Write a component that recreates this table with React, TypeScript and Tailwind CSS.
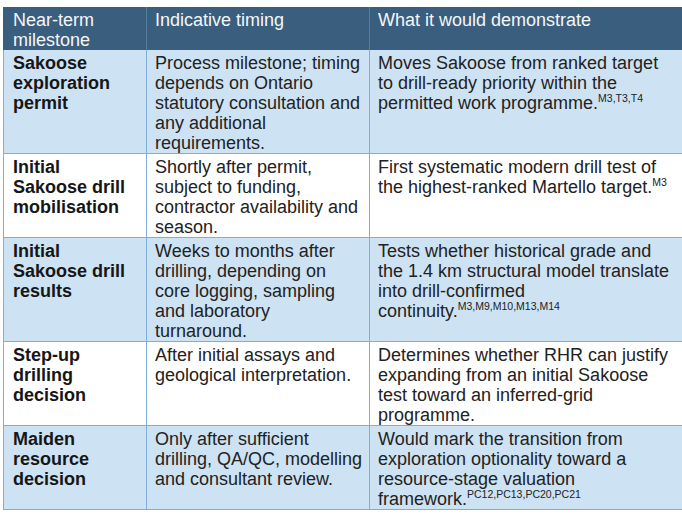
import React from 'react';

type Row = {
  milestone: string;
  timing: string;
  demo: string;
  refs?: string;
  shaded: boolean;
};

const rows: Row[] = [
  {
    milestone: 'Sakoose exploration permit',
    timing: 'Process milestone; timing depends on Ontario statutory consultation and any additional requirements.',
    demo: 'Moves Sakoose from ranked target to drill-ready priority within the permitted work programme.',
    refs: 'M3,T3,T4',
    shaded: true,
  },
  {
    milestone: 'Initial Sakoose drill mobilisation',
    timing: 'Shortly after permit, subject to funding, contractor availability and season.',
    demo: 'First systematic modern drill test of the highest-ranked Martello target.',
    refs: 'M3',
    shaded: false,
  },
  {
    milestone: 'Initial Sakoose drill results',
    timing: 'Weeks to months after drilling, depending on core logging, sampling and laboratory turnaround.',
    demo: 'Tests whether historical grade and the 1.4 km structural model translate into drill-confirmed continuity.',
    refs: 'M3,M9,M10,M13,M14',
    shaded: true,
  },
  {
    milestone: 'Step-up drilling decision',
    timing: 'After initial assays and geological interpretation.',
    demo: 'Determines whether RHR can justify expanding from an initial Sakoose test toward an inferred-grid programme.',
    shaded: false,
  },
  {
    milestone: 'Maiden resource decision',
    timing: 'Only after sufficient drilling, QA/QC, modelling and consultant review.',
    demo: 'Would mark the transition from exploration optionality toward a resource-stage valuation framework.',
    refs: 'PC12,PC13,PC20,PC21',
    shaded: true,
  },
];

export default function App() {
  return (
    <div className="w-[682px] h-[515px] overflow-hidden bg-white pt-[7px] pl-[3px] font-['Liberation_Sans',Arial,sans-serif] text-[18px] leading-[20px]">
      <div className="grid w-[679px] grid-cols-[143px_223px_313px]">
        {/* Header */}
        <div className="bg-[#3a5e7e] text-[#f4f6f8] pl-[9px] pr-[14px] pt-[3px] border-l border-[#3a5e7e]">
          Near-term milestone
        </div>
        <div className="bg-[#3a5e7e] text-[#f4f6f8] pl-[8px] pr-[5px] pt-[3px] border-l border-[#5b7d9c]">
          Indicative timing
        </div>
        <div className="bg-[#3a5e7e] text-[#f4f6f8] pl-[8px] pr-[8px] pt-[3px] border-l border-[#5b7d9c]">
          What it would demonstrate
        </div>

        {rows.map((r, i) => {
          const bg = r.shaded ? 'bg-[#cde2f3]' : 'bg-white';
          return (
            <React.Fragment key={i}>
              <div className={`${bg} border-l border-b border-[#7eaedb] pl-[9px] pr-[14px] pt-[3px] font-bold text-[#161616]`}>
                {r.milestone}
              </div>
              <div className={`${bg} border-l border-b border-[#7eaedb] pl-[8px] pr-[5px] pt-[3px] text-[#222]`}>
                {r.timing}
              </div>
              <div className={`${bg} border-l border-b border-[#7eaedb] pl-[8px] pr-[8px] pt-[3px] text-[#222]`}>
                {r.demo}
                {r.refs && (
                  <sup className="text-[10.5px] leading-none top-[-7px]">{r.refs}</sup>
                )}
              </div>
            </React.Fragment>
          );
        })}
      </div>
    </div>
  );
}
